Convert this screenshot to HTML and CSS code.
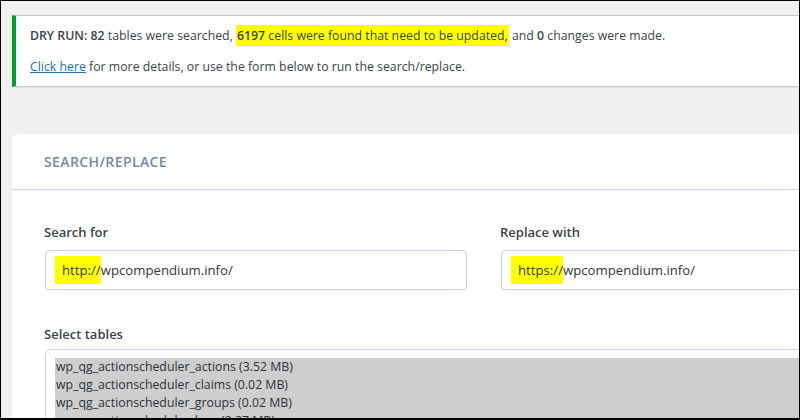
FILE: index.html
```html
<!DOCTYPE html>
<html lang="en">
<head>
    <meta charset="UTF-8">
    <title>Search Replace</title>
    <link rel="stylesheet" href="styles.css">
</head>
<body>
    <div class="frame">
        <div class="page">
            <div class="notice">
                <p><strong>DRY RUN:</strong> <strong>82</strong> tables were searched, <span class="hl"><strong>6197</strong> cells were found that need to be updated,</span> and <strong>0</strong> changes were made.</p>
                <p><a href="#">Click here</a> for more details, or use the form below to run the search/replace.</p>
            </div>

            <div class="card">
                <div class="card-header">Search/Replace</div>
                <div class="card-body">
                    <div class="row">
                        <div class="field">
                            <label>Search for</label>
                            <div class="input"><span class="hl-input">http://</span>wpcompendium.info/</div>
                        </div>
                        <div class="field">
                            <label>Replace with</label>
                            <div class="input"><span class="hl-input">https://</span>wpcompendium.info/</div>
                        </div>
                    </div>
                    <div class="field tables">
                        <label>Select tables</label>
                        <div class="select">
                            <div class="option">wp_qg_actionscheduler_actions (3.52 MB)</div>
                            <div class="option">wp_qg_actionscheduler_claims (0.02 MB)</div>
                            <div class="option">wp_qg_actionscheduler_groups (0.02 MB)</div>
                            <div class="option">wp_qg_actionscheduler_logs (2.27 MB)</div>
                            <div class="option">wp_qg_commentmeta (0.02 MB)</div>
                        </div>
                    </div>
                </div>
            </div>
        </div>
    </div>
</body>
</html>
```

FILE: styles.css
```css
/* General */
body {
    margin: 0;
    font-family: "Open Sans", "Noto Sans", sans-serif;
    font-size: 12.3px;
    color: #3c434a;
}

.frame {
    width: 800px;
    height: 420px;
    box-sizing: border-box;
    border: 1px solid #000;
    border-bottom-width: 2px;
    background-color: #f0f0f1;
    overflow: hidden;
}

.page {
    width: 1000px;
    padding: 14px 0 0 11px;
}

/* Notice */
.notice {
    background-color: #fff;
    border: 1px solid #c3c4c7;
    border-left: 4px solid #00a32a;
    box-shadow: 0 1px 1px rgba(0, 0, 0, 0.04);
    padding: 0 12px 0 14px;
}

.notice p {
    margin: 9px 0 8px;
    line-height: 22px;
}

.notice strong {
    font-weight: 600;
}

.notice a {
    color: #2271b1;
    text-decoration: underline;
}

.hl {
    background-color: #ffff00;
    padding: 2px 1px;
}

/* Card */
.card {
    margin-top: 47px;
    background-color: #fff;
    border-radius: 6px 0 0 0;
}

.card-header {
    height: 55px;
    line-height: 56px;
    padding-left: 32px;
    border-bottom: 1px solid #c8d7ea;
    color: #7489a4;
    font-weight: 600;
    font-size: 14px;
    text-transform: uppercase;
    letter-spacing: 0.4px;
}

.card-body {
    padding: 32px 32px 20px;
}

.row {
    display: flex;
    gap: 33px;
    margin-bottom: 34px;
}

.row .field {
    flex: 0 0 423px;
}

.field label {
    display: block;
    font-size: 13px;
    font-weight: 600;
    line-height: 20px;
    margin-bottom: 8px;
    color: #3c434a;
}

.tables label {
    margin-bottom: 5px;
}

.input {
    height: 38px;
    line-height: 38px;
    border: 1px solid #c9d6e9;
    border-radius: 4px;
    box-shadow: 0 1px 2px rgba(0, 0, 0, 0.06);
    padding-left: 9px;
    font-size: 13.2px;
    color: #32373c;
    margin-left: 1px;
}

.hl-input {
    background-color: #ffff00;
    padding: 5px 0 5px 7px;
}

.select {
    margin-left: 1px;
    border: 1px solid #c9d6e9;
    border-radius: 6px 0 0 0;
    padding: 8px 0 0 9px;
}

.option {
    background-color: #cecece;
    line-height: 18px;
    padding-left: 1px;
    font-size: 12.3px;
    color: #2c3338;
}
```
